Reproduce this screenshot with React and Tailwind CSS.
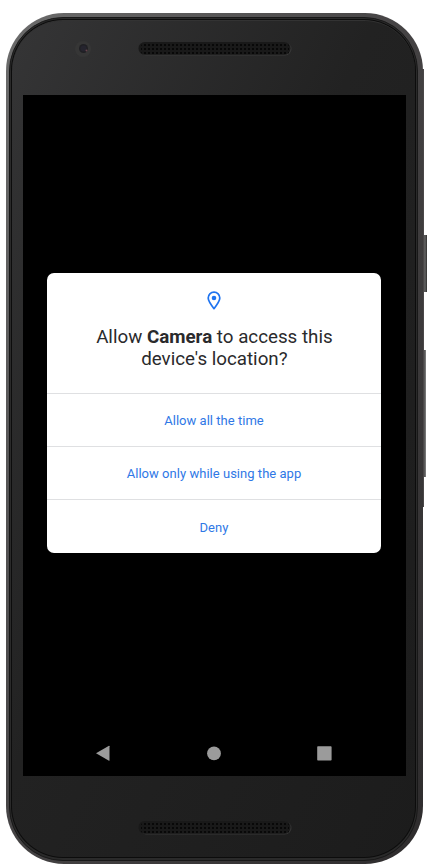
import React from "react";

function Speaker({ id, edge }) {
  return (
    <svg width="154" height="15" viewBox="0 0 154 15" className="block">
      <defs>
        <pattern id={id} width="4" height="4" patternUnits="userSpaceOnUse" x="1" y="2">
          <rect x="1" y="1" width="2" height="2" fill="#080808" />
        </pattern>
      </defs>
      <rect x="1.5" y="1.5" width="152" height="13" rx="6.5" fill={edge} />
      <rect x="0.5" y="1" width="152" height="12.8" rx="6.4" fill="#191919" />
      <rect x="3" y="2" width="148" height="12" rx="4" fill={`url(#${id})`} />
    </svg>
  );
}

function PinIcon() {
  return (
    <svg width="14" height="20" viewBox="0 0 14 20" className="block">
      <path
        d="M7 1.2C3.7 1.2 1.2 3.8 1.2 7.1C1.2 10.2 3.8 13.6 7 17.7C10.2 13.6 12.8 10.2 12.8 7.1C12.8 3.8 10.3 1.2 7 1.2Z"
        fill="none"
        stroke="#1f74f0"
        strokeWidth="1.7"
        strokeLinejoin="round"
      />
      <circle cx="7" cy="7" r="2.3" fill="#1f74f0" />
    </svg>
  );
}

function Dialog() {
  return (
    <div className="mt-[178px] ml-[24px] flex h-[279.5px] w-[334px] flex-col rounded-[7px] bg-white">
      <div className="flex h-[120px] flex-col items-center pt-[18px]">
        <PinIcon />
        <h1 className="mt-[15px] pl-[0.8px] text-center text-[18.75px] leading-[22px] font-normal whitespace-nowrap text-[#2a2a2c]">
          Allow <b className="font-bold">Camera</b> to access this
          <br />
          device's location?
        </h1>
      </div>
      {["Allow all the time", "Allow only while using the app", "Deny"].map((label) => (
        <button
          key={label}
          className="flex h-[53.2px] w-full items-center justify-center border-t border-[#dfe0e2] pt-[2px] text-[13px] tracking-[0.03px] text-[#2f78e6]"
        >
          {label}
        </button>
      ))}
    </div>
  );
}

function NavBar() {
  return (
    <svg width="383" height="45" viewBox="0 0 383 45" className="mt-auto block" fill="#9b9b9b">
      <path d="M73 22.3L86 14.8Q86.5 14.7 86.5 15.2V29.5Q86.5 30 86 29.8Z" />
      <circle cx="191" cy="22.4" r="6.9" />
      <rect x="294.2" y="15.2" width="14.4" height="14.3" rx="0.8" />
    </svg>
  );
}

export default function App() {
  return (
    <div
      className="relative h-[867px] w-[430px] overflow-hidden bg-white pt-[13px] pl-[6px]"
      style={{ fontFamily: 'Roboto, "Liberation Sans", sans-serif' }}
    >
      <div className="absolute top-[235px] left-[423px] h-[57px] w-[4px] bg-linear-to-r from-[#404040] via-[#646464] to-[#303030]" />
      <div className="absolute top-[350px] left-[423px] h-[127px] w-[3px] bg-linear-to-r from-[#303030] to-[#858585]" />
      <div className="absolute top-[69px] left-[422px] h-[438px] w-[2px] bg-[#4a4748]" />
      <div className="relative h-[851px] w-[417px] rounded-[58px] bg-linear-to-br from-[#6c6c6c] via-[#444243] to-[#2e2c2d] pt-[4px] pr-[5px] pb-[3px] pl-[3px]">
        <div className="h-full rounded-[54px] border border-[#181818] bg-[#2a2a2a] pt-px pr-px pb-[2px] pl-px">
          <div className="h-full rounded-[52px] bg-[#0c0c0c] p-px">
            <div className="flex h-full flex-col rounded-[51px] border-t border-[#333] bg-linear-to-br from-[#353536] via-[#222] via-45% to-[#1c1c1c]">
              <div className="flex h-[74px] shrink-0 pt-[20px] pl-[62px]">
                <svg width="18" height="18" viewBox="0 0 18 18" className="block">
                  <circle cx="9" cy="8" r="8" fill="#363636" />
                  <circle cx="9.5" cy="7.5" r="4.5" fill="#202024" />
                  <circle cx="9.5" cy="7.5" r="3" fill="#25242e" />
                  <circle cx="12.5" cy="9.5" r="1" fill="#67444c" />
                </svg>
                <div className="ml-[46px]"><Speaker id="top-grille" edge="#393939" /></div>
              </div>
              <main className="ml-[11px] flex h-[681px] w-[383px] shrink-0 flex-col bg-black">
                <Dialog />
                <NavBar />
              </main>
              <div className="mt-[44px] ml-[126px]"><Speaker id="bottom-grille" edge="#363636" /></div>
            </div>
          </div>
        </div>
      </div>
    </div>
  );
}
